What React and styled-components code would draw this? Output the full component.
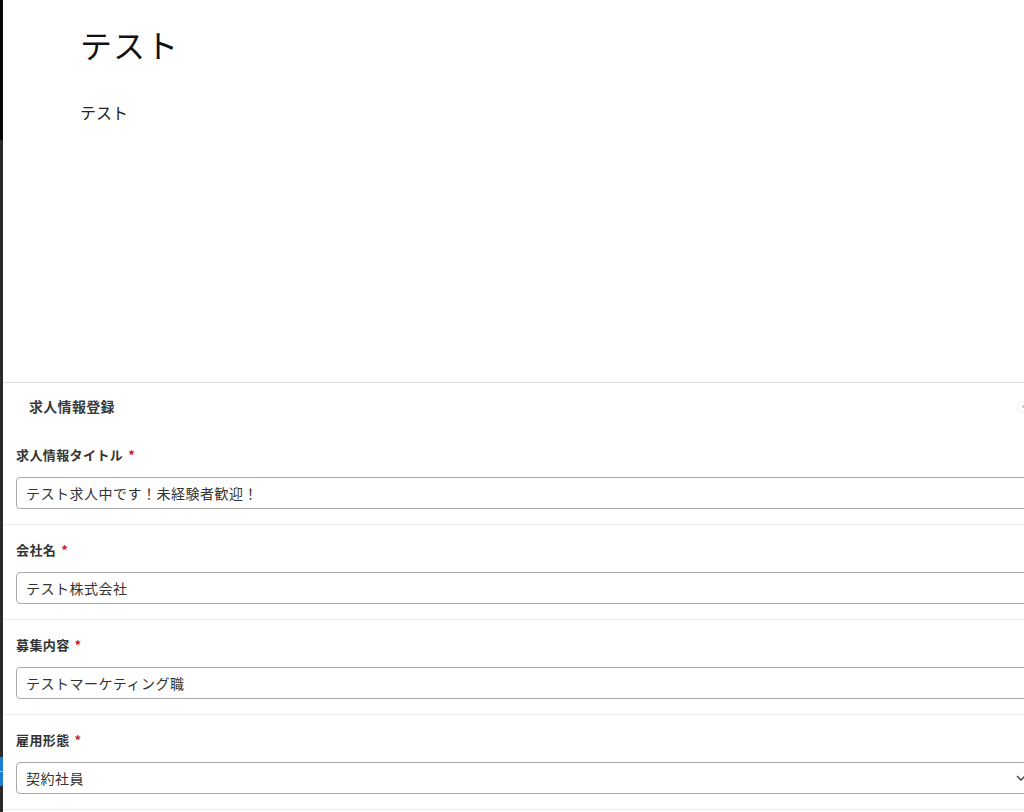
import React from "react";
import styled, { createGlobalStyle } from "styled-components";

const Global = createGlobalStyle`
  html, body { margin: 0; padding: 0; background: #fff; overflow: hidden; }
  * { box-sizing: border-box; }
`;

const Page = styled.div`
  display: flex;
  width: 1050px;
  min-height: 812px;
`;

const Strip = styled.div`
  width: 3px;
  flex: none;
  display: flex;
  flex-direction: column;
`;

const StripPart = styled.div`
  height: ${(p) => (p.$h ? `${p.$h}px` : "auto")};
  flex: ${(p) => (p.$h ? "none" : "1")};
  background: ${(p) => p.$c};
`;

const Main = styled.div`
  flex: 1;
  display: flex;
  flex-direction: column;
`;

const Top = styled.div`
  height: 382px;
  padding: 28px 0 0 77px;
  font-family: "Liberation Serif", "Noto Sans CJK JP", serif;
  color: #111;
`;

const Title = styled.h1`
  margin: 0 0 38px;
  font-size: 32px;
  line-height: 38px;
  font-weight: 400;
  letter-spacing: 1px;
`;

const Para = styled.p`
  margin: 0;
  font-size: 16px;
  line-height: 19px;
  color: #222;
`;

const Panel = styled.section`
  border-top: 1px solid #dcdcdc;
  font-family: "Noto Sans CJK JP", "Noto Sans", sans-serif;
`;

const PanelHeader = styled.div`
  display: flex;
  align-items: center;
  justify-content: space-between;
  padding: 14px 21px 14px 26px;
`;

const PanelTitle = styled.h2`
  margin: 0;
  font-size: 14px;
  line-height: 19px;
  font-weight: 700;
  color: #3a3a3a;
  letter-spacing: 0.3px;
`;

const Collapse = styled.span`
  width: 12px;
  height: 12px;
  border-radius: 50%;
  border: 1px solid #eee;
  display: flex;
  align-items: center;
  justify-content: center;
  &::after {
    content: "";
    width: 3px;
    height: 3px;
    border-radius: 50%;
    background: #ccc;
  }
`;

const Field = styled.div`
  padding: 16px 13px 15px;
  border-bottom: 1px solid #ececec;
`;

const Label = styled.label`
  display: block;
  margin-bottom: 13px;
  font-size: 13px;
  line-height: 18px;
  font-weight: 700;
  color: #333;
  letter-spacing: 0.4px;
`;

const Req = styled.span`
  color: #c0222b;
  margin-left: 5px;
`;

const Input = styled.input`
  display: block;
  width: 100%;
  height: 32px;
  padding: 0 9px;
  border: 1px solid #a9a9a9;
  border-radius: 4px;
  font-family: "Noto Sans CJK JP", "Noto Sans", sans-serif;
  font-size: 14px;
  letter-spacing: 0.5px;
  color: #333;
  background: #fff;
  outline: none;
`;

const Select = styled.div`
  display: flex;
  align-items: center;
  justify-content: space-between;
  height: 32px;
  padding: 0 10px 0 9px;
  border: 1px solid #a9a9a9;
  border-radius: 4px;
  font-size: 14px;
  letter-spacing: 0.5px;
  color: #333;
`;

const Chevron = () => (
  <svg width="10" height="6" viewBox="0 0 10 6" fill="none">
    <path d="M1 1l4 4 4-4" stroke="#444" strokeWidth="1.4" />
  </svg>
);

const fields = [
  { label: "求人情報タイトル", value: "テスト求人中です！未経験者歓迎！" },
  { label: "会社名", value: "テスト株式会社" },
  { label: "募集内容", value: "テストマーケティング職" },
];

export default function App() {
  return (
    <>
      <Global />
      <Page>
        <Strip>
          <StripPart $h={140} $c="#050505" />
          <StripPart $h={617} $c="#2a2a2a" />
          <StripPart $h={14} $c="#1a7fd4" />
          <StripPart $h={1} $c="#9fd0f5" />
          <StripPart $h={14} $c="#1a7fd4" />
          <StripPart $c="#2a2a2a" />
        </Strip>
        <Main>
          <Top>
            <Title>テスト</Title>
            <Para>テスト</Para>
          </Top>
          <Panel>
            <PanelHeader>
              <PanelTitle>求人情報登録</PanelTitle>
              <Collapse />
            </PanelHeader>
            {fields.map((f) => (
              <Field key={f.label}>
                <Label>
                  {f.label}
                  <Req>*</Req>
                </Label>
                <Input readOnly value={f.value} />
              </Field>
            ))}
            <Field>
              <Label>
                雇用形態
                <Req>*</Req>
              </Label>
              <Select>
                <span>契約社員</span>
                <Chevron />
              </Select>
            </Field>
          </Panel>
        </Main>
      </Page>
    </>
  );
}
